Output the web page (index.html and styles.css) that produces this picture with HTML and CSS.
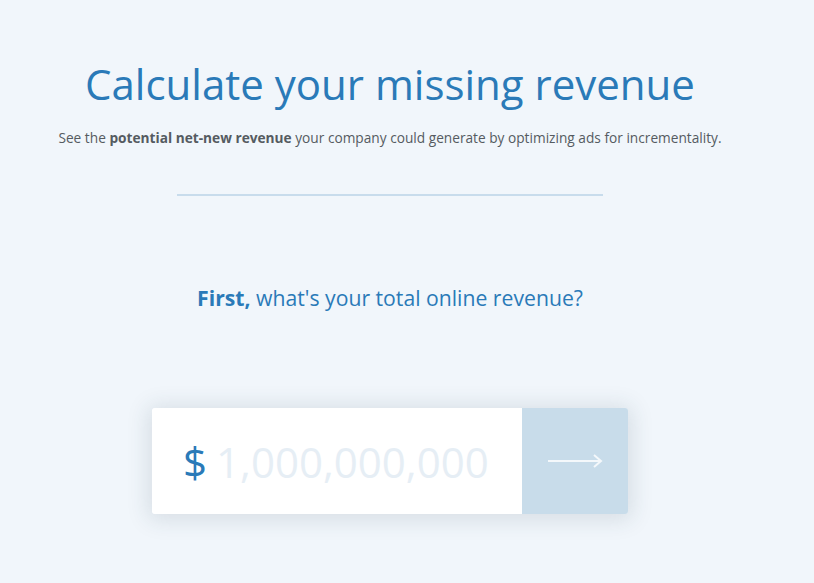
FILE: index.html
```html
<!DOCTYPE html>
<html>
<head>
<meta charset="utf-8">
<link rel="stylesheet" href="styles.css">
</head>
<body>
<main class="page">
  <h1 class="title">Calculate your missing revenue</h1>
  <p class="subtitle">See the <strong>potential net-new revenue</strong> your company could generate by optimizing ads for incrementality.</p>
  <div class="divider"></div>
  <h2 class="question"><strong>First,</strong> what's your total online revenue?</h2>
  <form class="entry">
    <label class="field">
      <span class="currency">$</span>
      <input class="amount" type="text" placeholder="1,000,000,000">
    </label>
    <button class="go" type="button" aria-label="Next">
      <svg width="56" height="16" viewBox="0 0 56 16"><path d="M1 8H54M47 2L54 8L47 14" fill="none" stroke="#f4f8fb" stroke-width="2"/></svg>
    </button>
  </form>
</main>
</body>
</html>
```
FILE: styles.css
```css
html, body {
  margin: 0;
  padding: 0;
  background: #f1f6fb;
  font-family: "Open Sans", "Noto Sans", sans-serif;
}
.page {
  width: 780px;
  height: 583px;
  display: flex;
  flex-direction: column;
  align-items: center;
  overflow: hidden;
}
.title {
  margin: 56px 0 0;
  font-size: 42px;
  font-weight: 400;
  color: #2a7ab8;
  line-height: 56px;
  letter-spacing: 0;
  white-space: nowrap;
}
.subtitle {
  margin: 17px 0 0;
  font-size: 13.7px;
  color: #555b61;
  line-height: 18px;
  white-space: nowrap;
}
.subtitle strong {
  font-weight: 700;
}
.divider {
  margin-top: 47px;
  width: 426px;
  height: 2px;
  background: #c8dcec;
}
.question {
  margin: 88px 0 0;
  font-size: 21.2px;
  font-weight: 400;
  color: #2a7ab8;
  line-height: 28px;
  white-space: nowrap;
}
.question strong {
  font-weight: 700;
}
.entry {
  margin: 96px 0 0;
  display: flex;
  width: 476px;
  height: 106px;
  border-radius: 3px;
  box-shadow: 0 2px 22px 4px rgba(40, 60, 80, 0.13);
}
.field {
  flex: 1;
  display: flex;
  align-items: center;
  background: #fff;
  border-radius: 3px 0 0 3px;
  padding-left: 31px;
}
.currency {
  font-size: 42px;
  color: #2a7ab8;
  margin-right: 9px;
}
.amount {
  border: 0;
  outline: 0;
  background: transparent;
  font-family: inherit;
  font-size: 42px;
  color: #2a7ab8;
  width: 290px;
  padding: 0;
}
.amount::placeholder {
  color: #e6eef5;
}
.go {
  width: 106px;
  border: 0;
  padding: 0;
  background: #c8dcea;
  border-radius: 0 3px 3px 0;
  display: flex;
  align-items: center;
  justify-content: center;
}
```
